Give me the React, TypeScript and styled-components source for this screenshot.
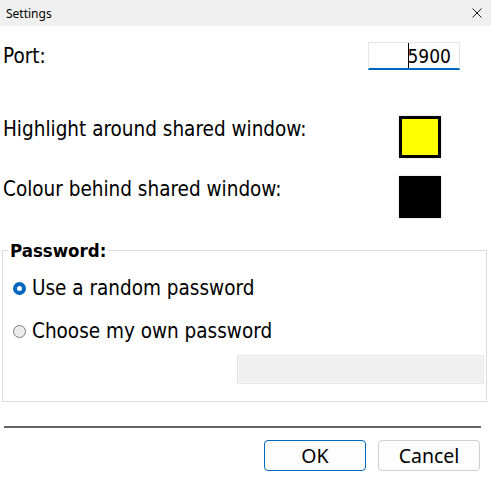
import React from "react";
import styled, { createGlobalStyle } from "styled-components";

const Global = createGlobalStyle`
  html, body { margin: 0; padding: 0; background: #ffffff; }
  * { box-sizing: border-box; }
`;

const Window = styled.div`
  width: 491px;
  height: 481px;
  display: flex;
  flex-direction: column;
  background: #ffffff;
  font-family: "DejaVu Sans Condensed", "DejaVu Sans", sans-serif;
  color: #000;
  overflow: hidden;
`;

const TitleBar = styled.div`
  height: 26px;
  flex: none;
  display: flex;
  align-items: center;
  justify-content: space-between;
  padding: 0 9px 0 6px;
  background: #f0f0f0;
  font-family: "Noto Sans", "Open Sans", sans-serif;
  font-size: 12px;
`;

const Content = styled.div`
  display: flex;
  flex-direction: column;
  padding: 0 4px 0 2px;
`;

const Row = styled.div<{ $top: number; $h: number }>`
  display: flex;
  align-items: center;
  justify-content: space-between;
  margin-top: ${(p) => p.$top}px;
  height: ${(p) => p.$h}px;
`;

const Label = styled.span<{ $lift?: number }>`
  font-size: 20.5px;
  padding-left: 1px;
  margin-bottom: ${(p) => p.$lift ?? 0}px;
`;

const PortInput = styled.div`
  position: relative;
  width: 92px;
  height: 28px;
  margin-right: 27px;
  border: 1px solid #e5e5e5;
  border-bottom: 2px solid #0067c0;
  display: flex;
  align-items: center;
  justify-content: flex-end;
  padding-right: 8px;
  font-size: 19px;
`;

const Caret = styled.span`
  position: absolute;
  left: 39px;
  top: 0;
  bottom: 0;
  width: 1px;
  background: #000;
`;

const Swatch = styled.div<{ $color: string; $framed?: boolean }>`
  width: 44px;
  height: 44px;
  margin-right: 45px;
  border: 1px solid #f0f0f0;
  background: ${(p) => p.$color};
  box-shadow: ${(p) => (p.$framed ? "inset 0 0 0 3px #000" : "none")};
`;

const Group = styled.fieldset`
  margin: 21px 0 0 0;
  padding: 0 2px 17px 5px;
  border: 1px solid #dcdcdc;
  display: flex;
  flex-direction: column;
`;

const Legend = styled.legend`
  font-size: 18.5px;
  font-weight: bold;
  padding: 0 2px;
`;

const RadioRow = styled.div<{ $top: number }>`
  display: flex;
  align-items: center;
  height: 24px;
  margin-top: ${(p) => p.$top}px;
  padding-left: 5px;
  font-size: 20.5px;
`;

const RadioDot = styled.span<{ $checked?: boolean }>`
  width: 13px;
  height: 13px;
  border-radius: 50%;
  margin-right: 6px;
  flex: none;
  ${(p) =>
    p.$checked
      ? `background: #ffffff; border: 4px solid #0067c0;`
      : `background: #ececec; border: 1px solid #7a7a7a;`}
`;

const DisabledInput = styled.div`
  align-self: flex-end;
  width: 247px;
  height: 29px;
  margin-top: 12px;
  border: 1px solid #e3e3e3;
  box-shadow: inset 0 0 0 1px #f8f8f8;
  background: #efefef;
`;

const Separator = styled.div`
  height: 2px;
  margin: 24px 6px 0 2px;
  background: #646464;
`;

const ButtonBar = styled.div`
  display: flex;
  justify-content: flex-end;
  gap: 12px;
  margin: 12px 7px 0 0;
`;

const Button = styled.button<{ $primary?: boolean }>`
  width: 102px;
  height: 31px;
  border-radius: 4px;
  background: #fdfdfd;
  border: 1px solid ${(p) => (p.$primary ? "#0067c0" : "#d0d0d0")};
  font-family: "Noto Sans", "Open Sans", sans-serif;
  font-size: 19.5px;
  color: #000;
  padding: 0;
  display: flex;
  align-items: center;
  justify-content: center;
`;

const Close = () => (
  <svg width="10" height="10" viewBox="0 0 10 10">
    <path d="M0.5 0.5 L9.5 9.5 M9.5 0.5 L0.5 9.5" stroke="#1a1a1a" strokeWidth="1" fill="none" />
  </svg>
);

export default function App() {
  return (
    <>
      <Global />
      <Window>
        <TitleBar>
          <span>Settings</span>
          <Close />
        </TitleBar>
        <Content>
          <Row $top={16} $h={28}>
            <Label>Port:</Label>
            <PortInput>
              <Caret />
              5900
            </PortInput>
          </Row>
          <Row $top={45} $h={44}>
            <Label $lift={16}>Highlight around shared window:</Label>
            <Swatch $color="#ffff00" $framed />
          </Row>
          <Row $top={16} $h={44}>
            <Label $lift={16}>Colour behind shared window:</Label>
            <Swatch $color="#000000" />
          </Row>
          <Group>
            <Legend>Password:</Legend>
            <RadioRow $top={15}>
              <RadioDot $checked />
              Use a random password
            </RadioRow>
            <RadioRow $top={19}>
              <RadioDot />
              Choose my own password
            </RadioRow>
            <DisabledInput />
          </Group>
          <Separator />
          <ButtonBar>
            <Button $primary>OK</Button>
            <Button>Cancel</Button>
          </ButtonBar>
        </Content>
      </Window>
    </>
  );
}
